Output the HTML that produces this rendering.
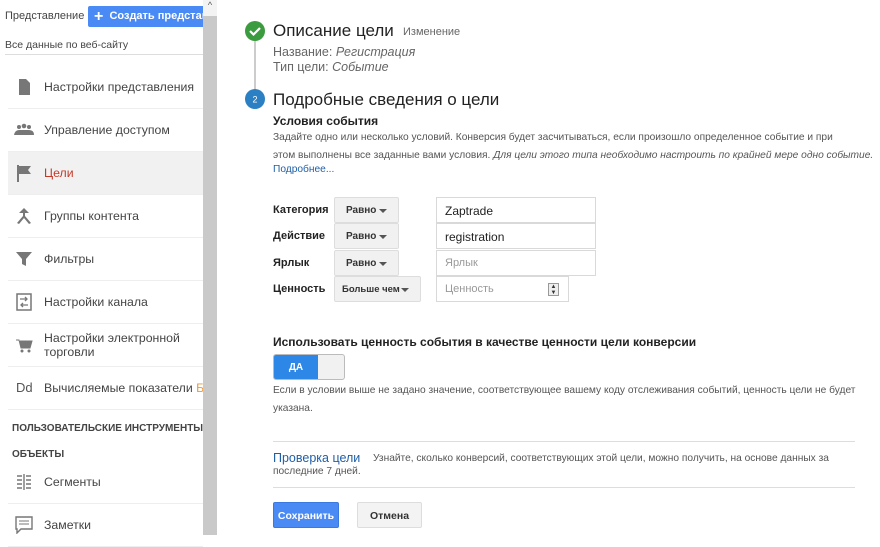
<!DOCTYPE html>
<html><head><meta charset="utf-8"><style>
*{box-sizing:border-box;margin:0;padding:0}
body{width:880px;height:535px;overflow:hidden;background:#fff;font-family:"Liberation Sans",Arial,sans-serif;position:relative;color:#222}
.a{position:absolute;white-space:nowrap}
.nav{position:absolute;left:8px;width:195px;height:43px;border-bottom:1px solid #eee;overflow:hidden;white-space:nowrap}
.nav .t{position:absolute;left:36px;top:50%;transform:translateY(-50%);font-size:12.3px;color:#444}
.nav .i{position:absolute;left:6px;top:50%;transform:translateY(-50%);width:20px;height:18px}
.lbl{position:absolute;left:273px;font-size:11px;font-weight:bold;color:#222}
.sel{position:absolute;left:334px;width:65px;height:26px;background:#f1f1f1;border:1px solid #ddd;border-radius:2px;font-size:10px;font-weight:bold;color:#333;padding:7px 0 0 11px;white-space:nowrap}
.sel:after{content:"";position:absolute;right:11px;top:11px;border:4px solid transparent;border-top:4px solid #555}
.inp{position:absolute;left:436px;width:160px;height:26px;border:1px solid #d9d9d9;font-size:12px;padding:6px 0 0 8px;color:#222}
</style></head><body>
<div class="a" style="left:5px;top:10px;font-size:11px;color:#444">Представление</div>
<div class="a" style="left:88px;top:6px;width:118px;height:21px;background:#4a8af4;border-radius:2px;color:#fff;font-size:11px;font-weight:bold;padding:4px 0 0 6px;overflow:hidden"><span style="font-size:16px;line-height:10px;vertical-align:-2px">+</span>&nbsp; Создать представл</div>
<div class="a" style="left:5px;top:39px;font-size:10.5px;color:#444">Все данные по веб-сайту</div>
<div class="a" style="left:5px;top:54px;width:198px;height:1px;background:#ddd"></div>
<div class="nav" style="top:66px"><svg class="i" viewBox="0 0 20 18"><path d="M5 1h7l4 4v12H5z" fill="#777"/></svg><span class="t">Настройки представления</span></div>
<div class="nav" style="top:109px"><svg class="i" viewBox="0 0 20 18"><circle cx="5" cy="6" r="2" fill="#777"/><circle cx="10" cy="5" r="2.3" fill="#777"/><circle cx="15" cy="6" r="2" fill="#777"/><path d="M0 14q1-5 5-5q3 0 5 0q3 0 5 0q5 0 5 5z" fill="#777"/></svg><span class="t">Управление доступом</span></div>
<div class="nav" style="top:152px;background:#f1f1f1"><svg class="i" viewBox="0 0 20 18"><path d="M3 1h2v17H3z M5 2h12l-3 4 3 4H5z" fill="#777"/></svg><span class="t" style="color:#c53929">Цели</span></div>
<div class="nav" style="top:195px"><svg class="i" viewBox="0 0 20 18"><path d="M10 1l-5 5h4v3l-6 7 2 1 5-6 5 6 2-1-6-7V6h4z" fill="#777"/></svg><span class="t">Группы контента</span></div>
<div class="nav" style="top:238px"><svg class="i" viewBox="0 0 20 18"><path d="M2 2h16l-6 7v7l-4-2V9z" fill="#777"/></svg><span class="t">Фильтры</span></div>
<div class="nav" style="top:281px"><svg class="i" viewBox="0 0 20 18"><rect x="3" y="1" width="14" height="16" fill="none" stroke="#777" stroke-width="1.5"/><path d="M6 6h7M11 4l2 2-2 2M14 12H7M9 10l-2 2 2 2" stroke="#777" fill="none" stroke-width="1.3"/></svg><span class="t">Настройки канала</span></div>
<div class="nav" style="top:324px"><svg class="i" viewBox="0 0 20 18"><path d="M2 4h3l2 8h9l2-7H6" fill="#777" stroke="#777"/><circle cx="8" cy="15" r="1.5" fill="#777"/><circle cx="15" cy="15" r="1.5" fill="#777"/></svg><span class="t" style="line-height:14px">Настройки электронной<br>торговли</span></div>
<div class="nav" style="top:367px"><span style="position:absolute;left:8px;top:13px;font-size:13px;color:#555">Dd</span><span class="t">Вычисляемые показатели <span style="color:#e69b3a">Б</span></span></div>
<div class="a" style="left:12px;top:423px;font-size:10px;font-weight:bold;color:#444;width:191px;overflow:hidden">ПОЛЬЗОВАТЕЛЬСКИЕ ИНСТРУМЕНТЫ И</div>
<div class="a" style="left:12px;top:449px;font-size:10px;font-weight:bold;color:#444">ОБЪЕКТЫ</div>
<div class="nav" style="top:461px"><svg class="i" viewBox="0 0 20 18"><path d="M3 3h5M3 7h5M3 11h5M3 15h5M10 1v16M12 3h5M12 7h5M12 11h5M12 15h5" stroke="#777" stroke-width="1.4"/></svg><span class="t">Сегменты</span></div>
<div class="nav" style="top:504px"><svg class="i" viewBox="0 0 20 18"><path d="M2 1h16v12H7l-4 4v-4H2z" fill="none" stroke="#777" stroke-width="1.4"/><path d="M5 5h10M5 8h10" stroke="#777"/></svg><span class="t">Заметки</span></div>
<div class="a" style="left:203px;top:0;width:14px;height:535px;background:#c9c9c9"></div>
<div class="a" style="left:203px;top:0;width:14px;height:16px;background:#f3f3f3;font-size:9px;color:#555;text-align:center">^</div>
<div class="a" style="left:254px;top:40px;width:2px;height:50px;background:#ccc"></div>
<svg class="a" style="left:245px;top:21px" width="20" height="20"><circle cx="10" cy="10" r="10" fill="#3b9c3f"/><path d="M5 10l3.5 3.5L15 7" stroke="#fff" stroke-width="2.2" fill="none"/></svg>
<svg class="a" style="left:245px;top:89px" width="20" height="20"><circle cx="10" cy="10" r="10" fill="#2b7fc3"/><text x="10" y="13.5" font-size="9" fill="#fff" text-anchor="middle" font-family="Liberation Sans">2</text></svg>
<div class="a" style="left:273px;top:21px;font-size:17px;color:#222">Описание цели</div>
<div class="a" style="left:403px;top:26px;font-size:11px;color:#666">Изменение</div>
<div class="a" style="left:273px;top:45px;font-size:12.5px;color:#666">Название: <i>Регистрация</i></div>
<div class="a" style="left:273px;top:60px;font-size:12.5px;color:#666">Тип цели: <i>Событие</i></div>
<div class="a" style="left:273px;top:90px;font-size:17px;color:#222">Подробные сведения о цели</div>
<div class="a" style="left:273px;top:114px;font-size:12px;font-weight:bold">Условия события</div>
<div class="a" style="left:273px;top:129px;font-size:10.2px;color:#555;line-height:18px">Задайте одно или несколько условий. Конверсия будет засчитываться, если произошло определенное событие и при<br>этом выполнены все заданные вами условия. <i>Для цели этого типа необходимо настроить по крайней мере одно событие.</i></div>
<div class="a" style="left:273px;top:164px;font-size:10.2px;color:#1f5fa8">Подробнее...</div>
<div class="lbl" style="top:204px">Категория</div><div class="sel" style="top:197px">Равно</div><div class="inp" style="top:197px">Zaptrade</div>
<div class="lbl" style="top:230px">Действие</div><div class="sel" style="top:223px">Равно</div><div class="inp" style="top:223px">registration</div>
<div class="lbl" style="top:257px">Ярлык</div><div class="sel" style="top:250px">Равно</div><div class="inp" style="top:250px;color:#999;font-size:11px">Ярлык</div>
<div class="lbl" style="top:283px">Ценность</div><div class="sel" style="top:276px;width:87px;padding-left:7px;font-size:9.5px">Больше чем</div><div class="inp" style="top:276px;width:133px;color:#999;font-size:11px">Ценность<span style="position:absolute;right:9px;top:6px;width:11px;height:13px;border:1px solid #999;background:#eee;font-size:6px;line-height:6px;text-align:center;color:#333">▲<br>▼</span></div>
<div class="a" style="left:273px;top:335px;font-size:12px;font-weight:bold">Использовать ценность события в качестве ценности цели конверсии</div>
<div class="a" style="left:273px;top:354px;width:72px;height:26px;border:1px solid #bbb;border-radius:3px;background:#f1f1f1;overflow:hidden"><div style="width:44px;height:26px;background:#2d87e6;color:#fff;font-size:10px;font-weight:bold;text-align:center;padding-top:7px">ДА</div></div>
<div class="a" style="left:273px;top:382px;font-size:10.2px;color:#555;line-height:18px">Если в условии выше не задано значение, соответствующее вашему коду отслеживания событий, ценность цели не будет<br>указана.</div>
<div class="a" style="left:273px;top:441px;width:582px;height:1px;background:#ddd"></div>
<div class="a" style="left:273px;top:451px;font-size:12.5px;color:#1f5fa8">Проверка цели</div>
<div class="a" style="left:373px;top:453px;font-size:10.2px;color:#555">Узнайте, сколько конверсий, соответствующих этой цели, можно получить, на основе данных за</div>
<div class="a" style="left:273px;top:466px;font-size:10.2px;color:#555">последние 7 дней.</div>
<div class="a" style="left:273px;top:487px;width:582px;height:1px;background:#ddd"></div>
<div class="a" style="left:273px;top:502px;width:66px;height:26px;background:#4a8af4;border:1px solid #3b78e0;border-radius:2px;color:#fff;font-size:10.5px;font-weight:bold;text-align:center;padding-top:7px">Сохранить</div>
<div class="a" style="left:357px;top:502px;width:65px;height:26px;background:#f3f3f3;border:1px solid #ddd;border-radius:2px;color:#333;font-size:10.5px;font-weight:bold;text-align:center;padding-top:7px">Отмена</div>
</body></html>
